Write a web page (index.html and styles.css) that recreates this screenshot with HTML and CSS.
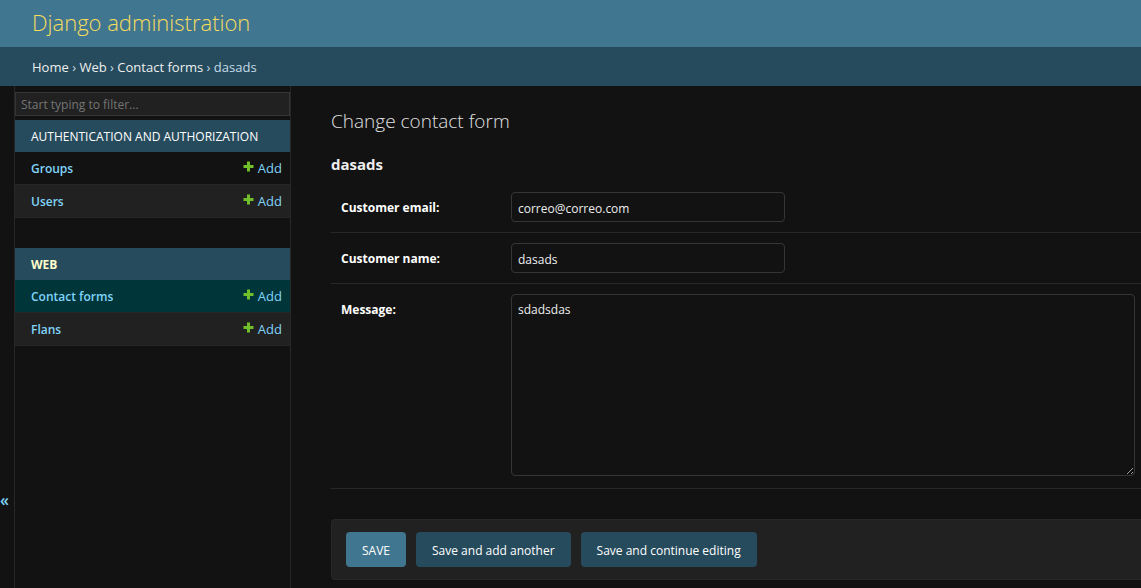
FILE: index.html
```html
<!DOCTYPE html>
<html lang="en">
<head>
<meta charset="utf-8">
<meta name="viewport" content="width=device-width, initial-scale=1">
<title>dasads | Change contact form | Django site admin</title>
<link rel="stylesheet" href="styles.css">
</head>
<body>
<svg class="sprite" aria-hidden="true">
  <symbol id="plus" viewBox="0 0 11 11"><path d="M4 0.500h3v3.500h3.500v3h-3.500v3.500h-3v-3.500h-3.500v-3h3.500z" fill="#70bf2b"/></symbol>
</svg>
<header class="header">
  <h1 class="site-name"><a href="#">Django administration</a></h1>
</header>
<nav class="breadcrumbs" aria-label="Breadcrumbs">
  <a href="#">Home</a> › <a href="#">Web</a> › <a href="#">Contact forms</a> › dasads
</nav>
<div class="main">
  <button class="toggle" type="button" aria-label="Toggle navigation">«</button>
  <nav class="sidebar" aria-label="Sidebar">
    <input class="filter" type="search" placeholder="Start typing to filter..." aria-label="Filter navigation items">
    <section class="module">
      <h2 class="caption"><a href="#">Authentication and Authorization</a></h2>
      <div class="model"><a class="name" href="#">Groups</a><a class="add" href="#"><svg class="plus"><use href="#plus"/></svg>Add</a></div>
      <div class="model alt"><a class="name" href="#">Users</a><a class="add" href="#"><svg class="plus"><use href="#plus"/></svg>Add</a></div>
    </section>
    <section class="module">
      <h2 class="caption current"><a href="#">Web</a></h2>
      <div class="model selected"><a class="name" href="#">Contact forms</a><a class="add" href="#"><svg class="plus"><use href="#plus"/></svg>Add</a></div>
      <div class="model alt"><a class="name" href="#">Flans</a><a class="add" href="#"><svg class="plus"><use href="#plus"/></svg>Add</a></div>
    </section>
  </nav>
  <main class="content">
    <h1 class="title">Change contact form</h1>
    <h2 class="object">dasads</h2>
    <form>
      <div class="row"><label for="email">Customer email:</label><input class="field" id="email" type="email" value="correo@correo.com"></div>
      <div class="row"><label for="name">Customer name:</label><input class="field" id="name" type="text" value="dasads"></div>
      <div class="row last"><label for="message">Message:</label><textarea class="field area" id="message">sdadsdas</textarea></div>
      <div class="submit-row">
        <button class="btn save" type="submit">SAVE</button>
        <button class="btn" type="submit">Save and add another</button>
        <button class="btn" type="submit">Save and continue editing</button>
      </div>
    </form>
  </main>
</div>
</body>
</html>
```
FILE: styles.css
```css
* { box-sizing: border-box; }
body {
  margin: 0;
  min-height: 100vh;
  display: flex;
  flex-direction: column;
  background: #121212;
  color: #eee;
  font-family: "Segoe UI", "Open Sans", "Noto Sans", sans-serif;
  font-size: 12px;
  line-height: 18px;
}
a { color: #81d4fa; text-decoration: none; }
h1, h2 { margin: 0; }
input, textarea, button { font: inherit; color: inherit; }
.sprite { display: none; }

.header { background: #417690; padding: 7px 32px 10px; }
.site-name { font-size: 22px; line-height: 30px; font-weight: 300; }
.site-name a { color: #f5dd5d; }
.breadcrumbs { background: #264b5d; color: #c4dce8; padding: 11px 32px 10px; font-size: 13px; }
.breadcrumbs a { color: #eee; }

.main { flex: 1; display: flex; }
.toggle {
  align-self: flex-end;
  width: 14px;
  height: 20px;
  margin-bottom: 78px;
  padding: 0;
  border: 0;
  background: none;
  color: #81d4fa;
  font-size: 16px;
  font-weight: 600;
  line-height: 20px;
  text-align: left;
}
.sidebar {
  width: 277px;
  flex: none;
  border: solid #272727;
  border-width: 0 1px;
  padding-top: 6px;
}
.filter {
  display: block;
  width: 100%;
  height: 24px;
  margin: 0 0 4px;
  padding: 1px 5px;
  border: 1px solid #353535;
  border-radius: 0;
  background: #212121;
  appearance: none;
}
.filter::placeholder { color: #757575; }
.module { margin-bottom: 30px; }
.caption {
  background: #264b5d;
  padding: 8px 16px 6px;
  font-size: 12px;
  font-weight: 400;
  text-transform: uppercase;
}
.caption a { color: #fff; }
.caption.current { font-weight: 700; }
.current a { color: #ffc; }
.model {
  display: flex;
  justify-content: space-between;
  padding: 7px 8px 7px 16px;
  border-bottom: 1px solid #272727;
}
.alt { background: #212121; }
.selected { background: #00363a; }
.name { font-weight: 600; line-height: 20px; margin-bottom: -2px; }
.add { display: flex; gap: 4px; font-size: 13px; }
.plus { width: 11px; height: 11px; margin-top: 2px; }

.content { flex: 1; min-width: 0; padding: 23px 0 8px 40px; }
.title { font-size: 19px; line-height: 24px; font-weight: 300; color: #e0e0e0; }
.object { font-size: 15px; line-height: 20px; font-weight: 700; margin: 21px 0 8px; }
.row {
  display: flex;
  align-items: flex-start;
  padding: 10px 6px 10px 10px;
  border-bottom: 1px solid #272727;
}
.row label { width: 170px; flex: none; padding-top: 7px; font-weight: 700; color: #fff; }
.last { padding-bottom: 12px; }
.field {
  width: 274px;
  height: 30px;
  padding: 6px 6px 4px;
  border: 1px solid #353535;
  border-radius: 4px;
  background: #121212;
  color: #eee;
}
.area { flex: 1; height: 182px; resize: vertical; }
.submit-row {
  display: flex;
  flex-wrap: wrap;
  gap: 10px;
  margin-top: 30px;
  padding: 12px 14px;
  border: 1px solid #272727;
  border-right: 0;
  border-radius: 4px 0 0 4px;
  background: #212121;
}
.btn {
  height: 35px;
  padding: 2px 16px 0;
  border: 0;
  border-radius: 4px;
  background: #264b5d;
  color: #fff;
}
.save { background: #417690; }
```
